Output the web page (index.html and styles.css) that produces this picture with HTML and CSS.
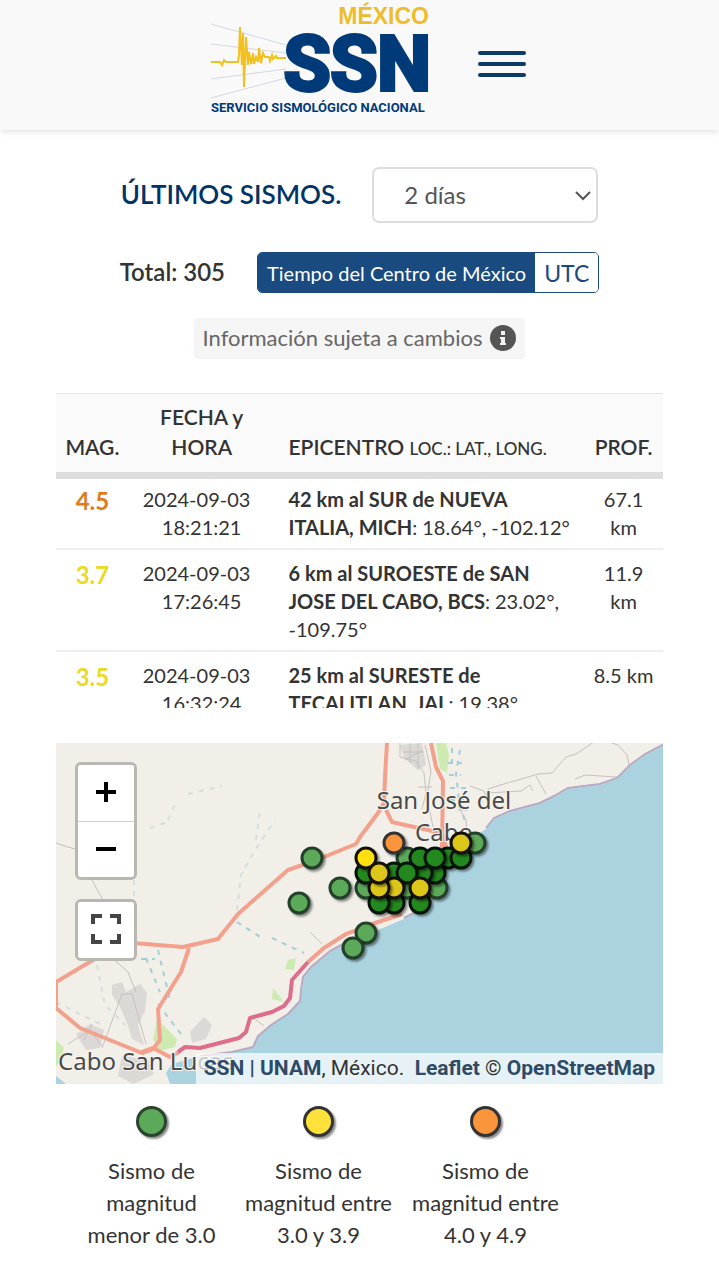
FILE: index.html
```html
<!DOCTYPE html>
<html lang="es">
<head>
  <meta charset="UTF-8">
  <meta name="viewport" content="width=device-width, initial-scale=1">
  <title>SSN - Últimos sismos</title>
  <link rel="stylesheet" href="styles.css">
</head>
<body>
  <header class="header">
    <a href="#" class="logo" aria-label="Servicio Sismológico Nacional">
      <svg width="222" height="118" viewBox="0 0 222 118">
        <g class="rays">
          <path d="M1 24L76 45M1 44L76 53M1 79L76 69M1 98L76 78"/>
        </g>
        <path class="wave" d="M1 62h9l2 3 2-5 2 2h12l1-7 1-28 2 38 1-32 1 54 2-50 2 28 1-13 2 12 2-11 1 11 2-7 2 5 1-14 2 15 2-10 2 4h4l1 4 2-6 1 4 3-3 1 2h9"/>
        <text class="logo-mx" x="219" y="24" text-anchor="end">MÉXICO</text>
        <text class="logo-ssn" x="221" y="90" text-anchor="end">SSN</text>
        <text class="logo-name" x="1" y="112">SERVICIO SISMOLÓGICO NACIONAL</text>
      </svg>
    </a>
    <button class="menu-btn" aria-label="Menú">
      <span></span><span></span><span></span>
    </button>
  </header>

  <main class="content">
    <div class="filters">
      <label class="title" for="periodo">ÚLTIMOS SISMOS.</label>
      <div class="select-box">
        <select id="periodo">
          <option>2 días</option>
        </select>
        <svg class="arrow" width="18" height="12" viewBox="0 0 18 12"><path d="M2 2l7 7 7-7"/></svg>
      </div>
    </div>

    <div class="totals">
      <div class="total">Total: 305</div>
      <div class="time-group">
        <button class="time-btn active">Tiempo del Centro de México</button>
        <button class="time-btn">UTC</button>
      </div>
    </div>

    <div class="notice">
      <span>Información sujeta a cambios</span>
      <svg width="26" height="26" viewBox="0 0 26 26">
        <circle cx="13" cy="13" r="13" fill="#555"/>
        <path fill="#f5f5f5" d="M11 6h4v4h-4zM10 12h5v6h1v2h-6v-2h1v-4h-1z"/>
      </svg>
    </div>

    <div class="table-box">
      <table>
        <thead>
          <tr>
            <th class="mag-col">MAG.</th>
            <th class="date-col">FECHA y HORA</th>
            <th class="epi-col">EPICENTRO <small>LOC.: LAT., LONG.</small></th>
            <th class="prof-col">PROF.</th>
          </tr>
        </thead>
        <tbody>
          <tr>
            <td class="mag orange">4.5</td>
            <td>2024-09-03&nbsp;&nbsp; 18:21:21</td>
            <td class="epi"><b>42 km al SUR de NUEVA ITALIA, MICH</b>: 18.64°, -102.12°</td>
            <td>67.1 km</td>
          </tr>
          <tr>
            <td class="mag yellow">3.7</td>
            <td>2024-09-03&nbsp;&nbsp; 17:26:45</td>
            <td class="epi"><b>6 km al SUROESTE de SAN JOSE DEL CABO, BCS</b>: 23.02°, -109.75°</td>
            <td>11.9 km</td>
          </tr>
          <tr>
            <td class="mag yellow">3.5</td>
            <td>2024-09-03&nbsp;&nbsp; 16:32:24</td>
            <td class="epi"><b>25 km al SURESTE de TECALITLAN, JAL</b>: 19.38°</td>
            <td>8.5&nbsp;km</td>
          </tr>
        </tbody>
      </table>
    </div>

    <div class="map">
      <svg class="map-canvas" viewBox="56 743 607 341" preserveAspectRatio="xMidYMid slice">
        <rect class="land" x="56" y="743" width="608" height="341"/>
        <!-- parques -->
        <path class="park" d="M436 743h10l3 12-2 18-7-4zM157 1019l20 20-2 8-16 4-6-12zM288 960l8-2-2 12-9-1zM273 988l8 10 3 4-12-3zM56 1040l8 8-4 14-4 4z"/>
        <!-- zonas urbanas -->
        <path class="urban" d="M112 985l10-3 4 10 14-8 7 9-2 18-7 14 6 20-12-6-4-14-8-18-8-12zM76 1034l14-10 14 6-4 18-14 2zM190 1032l14-15 8 8-6 14-14 4zM122 1056l26 4 6 14-20 10-16-8zM400 745l22-2 4 22-8 5-14-12z"/>
        <!-- mar -->
        <path class="sea" d="M664 745L645 755 630 766 617 779 600 785 568 789 554 797 540 804 510 812 494 819 486 829 478 834 474 850 470 866 444 870 440 890 420 911 404 919 378 930 352 940 330 952 312 967 304 977 302 990 300 1001 288 1014 271 1025 258 1036 253 1047 232 1052 200 1056 172 1064 166 1073 170 1084H664z"/>
        <path class="sea" d="M56 1076l10 8H56z"/>
        <!-- arroyos -->
        <g class="stream">
          <path d="M452 748v20M460 750l-4 24 3 26 6 22M448 763h14M449 775h12M450 788h16M450 800h14"/>
          <path d="M237 922l28 18M272 938l32 15M146 958l14 34M158 950l12 50M158 1004l26 34M141 959h14"/>
          <path class="faint" d="M134 880v22M97 965l8 40 20 20M56 1002l48 24M237 910l4-35 14-25 20-30M256 840l4-30M150 828l18-6M168 820l8-18M188 794l34-8"/>
        </g>
        <!-- calles -->
        <g class="street">
          <path d="M56 843l12 4 14 4M92 880l12 22M112 958l16 14 8 20M122 994l-20 54M132 994l14 50M122 994h10M68 1044l22-14 12 16M92 1024l-8 16M400 743v14l16 4 8 12 2 20-4 16M425 745l6 26-4 26 6 30M404 752h20M410 743v20M418 743v26M405 760l18-10M418 787h14M458 806l8 14 1 18M458 810h10M310 932l12 12M256 1020l8 6"/>
          <path d="M486 798l2-9 16-5 24-7 10-3 14-1 14-16 10-3 18-12 12-1 12 4 9 10 3 14M536 776l10 18M487 793l34-2 9-6 3 6M575 779l10-4 32 2M470 786l14 5 3 7"/>
        </g>
        <!-- carreteras -->
        <path class="coast" d="M664 744L645 754 630 765 617 778 600 784 568 788 554 796 540 803 510 811 494 818 486 828M440 893L420 910 404 918M352 939L330 951 311 967 303 977 301 990 300 1001 288 1014 271 1025 258 1036 253 1047 232 1052 200 1056"/>
        <g class="road">
          <path d="M387 743l-2 34-1 26-6 10-18 24-4 7-42 17-26 9-50 44-20 25-35 8-50-4-40 17-37 22v26l24 20 62 25 11-4 7-9-2-31 23-37 8-24M386 810l6 12 13 3 37 8 6 21M431 743l5 24 7 14-1 67M142 1052l11-4 17 9 9-5M308 962l16-14 22-14 26-10 30-10"/>
        </g>
        <path class="highway" d="M308 962l-16 18-2 18-6 8-12 6-22 6-4 14-7 6-39 10-15-1-7 5"/>
        <g class="place">
          <text x="444" y="809" text-anchor="middle">San José del</text>
          <text x="444" y="841" text-anchor="middle">Cabo</text>
          <text x="58" y="1070">Cabo San Lucas</text>
        </g>
        <g class="quake green">
          <circle cx="312" cy="858" r="10"/>
          <circle cx="340" cy="888" r="10"/>
          <circle cx="299" cy="903" r="10"/>
          <circle cx="366" cy="933" r="10"/>
          <circle cx="353" cy="948" r="10"/>
          <circle cx="475" cy="843" r="10"/>
          <circle cx="407" cy="858" r="10"/>
          <circle cx="366" cy="888" r="10"/>
          <circle cx="437" cy="888" r="10"/>
          <circle cx="407" cy="888" r="10"/>
        </g>
        <g class="quake green dense">
          <circle cx="448" cy="858" r="10"/>
          <circle cx="461" cy="858" r="10"/>
          <circle cx="435" cy="873" r="10"/>
          <circle cx="422" cy="873" r="10"/>
          <circle cx="420" cy="858" r="10"/>
          <circle cx="435" cy="858" r="10"/>
          <circle cx="366" cy="873" r="10"/>
          <circle cx="394" cy="873" r="10"/>
          <circle cx="407" cy="873" r="10"/>
          <circle cx="394" cy="903" r="10"/>
          <circle cx="379" cy="903" r="10"/>
          <circle cx="420" cy="903" r="10"/>
        </g>
        <g class="quake yellow dense">
          <circle cx="366" cy="858" r="10" class="bright"/>
          <circle cx="461" cy="843" r="10"/>
          <circle cx="394" cy="888" r="10"/>
          <circle cx="379" cy="888" r="10"/>
          <circle cx="379" cy="873" r="10"/>
          <circle cx="420" cy="888" r="10"/>
        </g>
        <g class="quake orange">
          <circle cx="394" cy="843" r="10"/>
        </g>
      </svg>

      <div class="controls">
        <div class="control">
          <button aria-label="Acercar"><svg width="22" height="22" viewBox="0 0 22 22"><path d="M1 11h20M11 1v20"/></svg></button>
          <button aria-label="Alejar"><svg width="22" height="22" viewBox="0 0 22 22"><path d="M1 11h20"/></svg></button>
        </div>
        <div class="control full">
          <button aria-label="Pantalla completa"><svg width="32" height="32" viewBox="0 0 32 32"><path d="M3 11V3h9M20 3h9v8M29 21v8h-9M12 29H3v-8"/></svg></button>
        </div>
      </div>

      <div class="attribution"><a href="#">SSN | UNAM</a>, México.&nbsp; <a href="#">Leaflet</a> © <a href="#">OpenStreetMap</a></div>
    </div>

    <div class="legend">
      <div class="legend-item">
        <span class="dot green"></span>
        <p>Sismo de magnitud menor de 3.0</p>
      </div>
      <div class="legend-item">
        <span class="dot yellow"></span>
        <p>Sismo de magnitud entre 3.0 y 3.9</p>
      </div>
      <div class="legend-item">
        <span class="dot orange"></span>
        <p>Sismo de magnitud entre 4.0 y 4.9</p>
      </div>
    </div>
  </main>
</body>
</html>
```
FILE: styles.css
```css
* {
  box-sizing: border-box;
}
body {
  margin: 0;
  font-family: Lato, "Liberation Sans", sans-serif;
  color: #333;
  background: #fff;
}
button, select {
  font-family: inherit;
  cursor: pointer;
}

/* encabezado */
.header {
  display: flex;
  justify-content: center;
  align-items: flex-start;
  gap: 46px;
  height: 130px;
  padding-left: 17px;
  background: #f9f9f9;
  box-shadow: 0 2px 6px rgba(0,0,0,0.12);
}
.logo svg {
  display: block;
}
.rays path {
  fill: none;
  stroke: #d5d7e2;
  stroke-width: 1;
}
.wave {
  fill: none;
  stroke: #f2c120;
  stroke-width: 2;
}
.logo text {
  font-family: "Liberation Sans", sans-serif;
  font-weight: bold;
  fill: #003a78;
}
.logo .logo-mx {
  font-size: 23px;
  fill: #edbd2c;
}
.logo .logo-ssn {
  font-family: Roboto, "Liberation Sans", sans-serif;
  font-size: 76px;
  stroke: #003a78;
  stroke-width: 4;
}
.logo .logo-name {
  font-family: Roboto, "Liberation Sans", sans-serif;
  font-size: 13px;
}
.menu-btn {
  display: flex;
  flex-direction: column;
  gap: 7px;
  width: 48px;
  margin-top: 51px;
  padding: 0;
  border: none;
  background: none;
}
.menu-btn span {
  height: 4px;
  border-radius: 2px;
  background: #0b3c68;
}

/* filtros */
.content {
  padding: 37px 56px 24px;
}
.filters {
  display: flex;
  justify-content: center;
  align-items: center;
  gap: 31px;
}
.title {
  padding-bottom: 2px;
  font-size: 26px;
  font-weight: 600;
  color: #003366;
}
.select-box {
  position: relative;
  width: 226px;
}
.select-box select {
  width: 100%;
  height: 56px;
  padding: 0 30px 2px;
  border: 2px solid #ddd;
  border-radius: 7px;
  background: #fff;
  color: #555;
  font-size: 24px;
  appearance: none;
}
.arrow {
  position: absolute;
  right: 6px;
  top: 23px;
  pointer-events: none;
}
.arrow path {
  fill: none;
  stroke: #555;
  stroke-width: 2;
}
.totals {
  display: flex;
  justify-content: center;
  align-items: center;
  gap: 32px;
  margin-top: 29px;
}
.total {
  padding-bottom: 3px;
  font-size: 24px;
  font-weight: 600;
}
.time-group {
  display: flex;
  height: 41px;
  border: 1px solid #1a4b80;
  border-radius: 5px;
  overflow: hidden;
}
.time-btn {
  padding: 0 9px;
  border: none;
  background: #fff;
  color: #1a4b80;
  font-size: 23px;
}
.time-btn.active {
  background: #1a4b80;
  color: #fff;
  font-size: 20px;
}
.notice {
  display: flex;
  justify-content: center;
  align-items: center;
  gap: 8px;
  width: fit-content;
  height: 41px;
  margin: 25px auto 34px;
  padding: 0 9px 2px;
  border-radius: 4px;
  background: #f5f5f5;
  color: #666;
  font-size: 22px;
}

/* tabla */
.table-box {
  height: 315px;
  overflow-y: auto;
  scrollbar-width: none;
}
table {
  width: 100%;
  border-spacing: 0;
  text-align: center;
}
th {
  padding: 8px 5px 10px;
  border-top: 1px solid #e5e5e5;
  border-bottom: 7px solid #ddd;
  background: #fafafa;
  font-size: 21px;
  line-height: 30px;
  font-weight: 600;
  vertical-align: bottom;
}
th small {
  font-size: 17px;
  line-height: 1;
  font-weight: 500;
}
td {
  padding: 9px 9px 7px;
  border-bottom: 2px solid #eee;
  font-size: 20px;
  line-height: 28px;
  vertical-align: top;
}
tbody tr:first-child td {
  padding-top: 6px;
}
.mag-col {
  width: 12%;
}
.date-col {
  width: 24%;
  padding-left: 24px;
  padding-right: 24px;
}
.epi-col,
.epi {
  padding-left: 14px;
  padding-right: 9px;
  text-align: left;
}
.prof-col {
  width: 13%;
}
.epi b {
  font-weight: 700;
}
td.mag {
  font-size: 24px;
  line-height: 32px;
  font-weight: 700;
}
.mag.orange {
  color: #e07b1a;
}
.mag.yellow {
  color: #ecd923;
}

/* mapa */
.map {
  position: relative;
  height: 341px;
  margin-top: 35px;
  overflow: hidden;
}
.map-canvas {
  display: block;
  width: 100%;
  height: 100%;
}
.land {
  fill: #f2efe9;
}
.sea {
  fill: #aad3df;
}
.park {
  fill: #cdebb0;
}
.urban {
  fill: #dcd8d6;
}
.stream path {
  fill: none;
  stroke: #a5cfd6;
  stroke-width: 2;
  stroke-dasharray: 5 6;
}
.stream .faint {
  stroke: #d3dfde;
}
.street path {
  fill: none;
  stroke: #c4c1bf;
  stroke-width: 1;
}
.coast {
  fill: none;
  stroke: #b9a9c4;
  stroke-width: 2;
}
.road {
  fill: none;
  stroke: #f3a18c;
  stroke-width: 4;
  stroke-linejoin: round;
}
.highway {
  fill: none;
  stroke: #dd6d8a;
  stroke-width: 4;
  stroke-linejoin: round;
}
.place text {
  font-family: "Noto Sans", sans-serif;
  font-size: 24px;
  fill: #4a4a4a;
  stroke: #f7f5f1;
  stroke-width: 2;
  paint-order: stroke;
}
.quake circle {
  stroke: #333;
  stroke-width: 3;
  filter: drop-shadow(2px 2px 1px rgba(0,0,0,0.45));
}
.quake.green circle {
  fill: #5ca95a;
  stroke: #23402a;
}
.quake.green.dense circle {
  fill: #23891f;
  stroke: #03140a;
}
.quake.yellow circle {
  fill: #dcc61a;
  stroke: #14110a;
}
.quake.yellow .bright {
  fill: #ffdf10;
}
.quake.orange circle {
  fill: #fb953b;
}
.controls {
  position: absolute;
  top: 19px;
  left: 19px;
}
.control {
  width: 62px;
  margin-bottom: 19px;
  border: 3px solid #bab7b2;
  border-radius: 6px;
  overflow: hidden;
}
.control button {
  display: flex;
  justify-content: center;
  align-items: center;
  width: 100%;
  height: 56px;
  padding: 0 0 2px;
  border: none;
  background: #fff;
}
.control button + button {
  border-top: 1px solid #ccc;
}
.control svg {
  fill: none;
  stroke: #000;
  stroke-width: 4;
}
.control.full svg {
  stroke: #444;
}
.attribution {
  position: absolute;
  right: 0;
  bottom: 0;
  padding: 0 8px;
  background: rgba(255,255,255,0.7);
  font-family: Roboto, sans-serif;
  font-size: 21px;
  line-height: 31px;
}
.attribution a {
  color: #2f4a66;
  font-weight: 700;
  text-decoration: none;
}

/* simbología */
.legend {
  display: grid;
  grid-template-columns: repeat(3, 167px);
  margin: 22px 0 0 12px;
}
.legend-item {
  display: flex;
  flex-direction: column;
  align-items: center;
  gap: 18px;
  text-align: center;
}
.legend-item p {
  margin: 0;
  padding: 0 5px;
  font-size: 22px;
  line-height: 32px;
}
.dot {
  width: 31px;
  height: 31px;
  border: 3px solid #333;
  border-radius: 50%;
  box-shadow: 2px 2px 2px rgba(0,0,0,0.45);
}
.dot.green {
  background: #5ca95a;
  border-color: #2a452d;
}
.dot.yellow {
  background: #fee23a;
}
.dot.orange {
  background: #fb953b;
}
```
